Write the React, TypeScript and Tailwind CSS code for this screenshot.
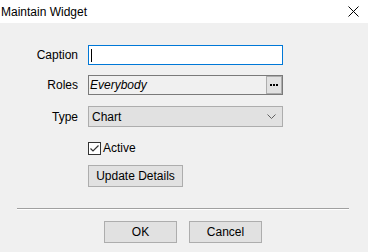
import React from "react";

const font = { fontFamily: '"Liberation Sans", Arial, sans-serif' };

function Row({ label, children, className = "" }: { label: string; children: React.ReactNode; className?: string }) {
  return (
    <div className={`flex items-center ${className}`}>
      <div className="w-[78px] text-right text-[12px] text-black">{label}</div>
      <div className="ml-[10px] w-[195px]">{children}</div>
    </div>
  );
}

export default function App() {
  return (
    <div className="w-[368px] h-[252px] bg-[#f0f0f0] overflow-hidden text-black" style={font}>
      {/* Title bar */}
      <div className="h-[23px] bg-white flex items-center justify-between pl-[1px] pr-[9px]">
        <span className="text-[12px] leading-none">Maintain Widget</span>
        <svg width="11" height="11" viewBox="0 0 11 11">
          <path d="M0.5 0.5 L10.5 10.5 M10.5 0.5 L0.5 10.5" stroke="#000" strokeWidth="1" />
        </svg>
      </div>

      {/* Form */}
      <div className="pt-[22px]">
        <Row label="Caption">
          <div className="h-[20px] bg-white border border-[#0078d7] flex items-center px-[2px]">
            <span className="w-[1px] h-[13px] bg-black" />
          </div>
        </Row>

        <Row label="Roles" className="mt-[10px]">
          <div className="h-[20px] border border-[#7a7a7a] flex items-center justify-between">
            <span className="italic text-[12px] pl-[1px]">Everybody</span>
            <div className="w-[16px] h-[18px] bg-[#e1e1e1] border border-[#adadad] flex items-center justify-center">
              <svg width="8" height="2" viewBox="0 0 8 2">
                <rect x="0" y="0" width="2" height="2" fill="#000" />
                <rect x="3" y="0" width="2" height="2" fill="#000" />
                <rect x="6" y="0" width="2" height="2" fill="#000" />
              </svg>
            </div>
          </div>
        </Row>

        <Row label="Type" className="mt-[11px]">
          <div className="h-[21px] bg-[#e1e1e1] border border-[#adadad] flex items-center justify-between pl-[3px] pr-[6px]">
            <span className="text-[12px]">Chart</span>
            <svg width="9" height="5" viewBox="0 0 9 5">
              <path d="M0.5 0.5 L4.5 4.5 L8.5 0.5" stroke="#606060" strokeWidth="1" fill="none" />
            </svg>
          </div>
        </Row>

        <div className="ml-[88px] mt-[15px] h-[13px] flex items-center">
          <div className="w-[13px] h-[13px] border border-[#333] bg-white flex items-center justify-center">
            <svg width="11" height="11" viewBox="0 0 11 11">
              <path d="M1.5 5.5 L4 8 L9.5 2.5" stroke="#333" strokeWidth="1.2" fill="none" />
            </svg>
          </div>
          <span className="ml-[2px] text-[12px] leading-[13px]">Active</span>
        </div>

        <div className="ml-[88px] mt-[10px]">
          <button className="w-[95px] h-[22px] bg-[#e1e1e1] border border-[#adadad] text-[12px] flex items-center justify-center">
            Update Details
          </button>
        </div>

        <div className="mx-[17px] w-[332px] mt-[21px] border-t border-[#a0a0a0] border-b border-b-white" />

        <div className="mt-[11px] ml-[104px] flex gap-[12px]">
          <button className="w-[73px] h-[22px] bg-[#e1e1e1] border border-[#adadad] text-[12px] flex items-center justify-center">
            OK
          </button>
          <button className="w-[73px] h-[22px] bg-[#e1e1e1] border border-[#adadad] text-[12px] flex items-center justify-center">
            Cancel
          </button>
        </div>
      </div>
    </div>
  );
}
